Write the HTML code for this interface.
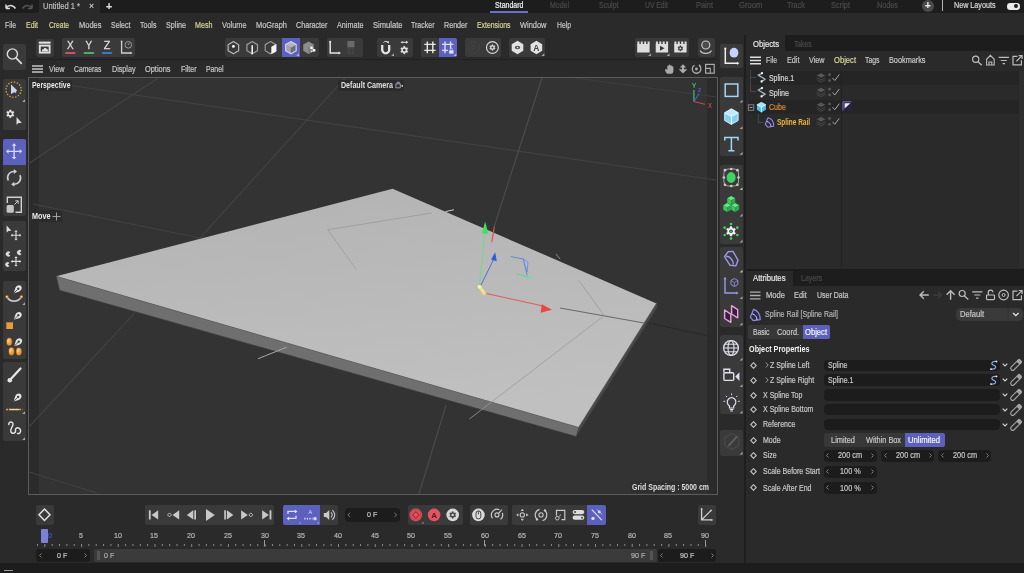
<!DOCTYPE html>
<html><head><meta charset="utf-8"><title>Cinema 4D</title>
<style>
html,body{margin:0;padding:0;background:#2a2a2a;overflow:hidden;}
body{width:1024px;height:573px;position:relative;font-family:"Liberation Sans",sans-serif;}
div,span,svg{position:absolute;display:block;}
span{white-space:nowrap;-webkit-text-stroke:0.2px currentColor;transform-origin:0 50%;}
#t{left:0;top:0;width:1024px;height:573px;will-change:transform;}
</style></head><body><div id="t">
<div style="left:0px;top:0px;width:1024px;height:13px;background:#1d1d1d;"></div>
<div style="left:39px;top:0px;width:61px;height:13px;background:#2a2a2a;"></div>
<span style="left:43.00px;top:2.12px;font-size:8.13px;line-height:9.76px;color:#bdbdbd;transform:scaleX(0.9302);">Untitled 1 *</span>
<span style="left:89.00px;top:0.22px;font-size:9.63px;line-height:11.56px;color:#d0d0d0;transform:scaleX(0.9000);">×</span>
<span style="left:106.00px;top:-1.06px;font-size:11.77px;line-height:14.12px;color:#e0e0e0;transform:scaleX(0.9000);font-weight:700;">+</span>
<svg style="left:4px;top:2px;" width="30" height="9" viewBox="0 0 30 9"><path d="M2 6.5 L2 2.5 M2 6.5 L6 6.5 M2 6.2 C4.5 2.5 9 2.5 11.5 6.5" stroke="#d8d8d8" stroke-width="1.5" fill="none"/><path d="M28 6.5 L28 2.5 M28 6.5 L24 6.5 M28 6.2 C25.5 2.5 21 2.5 18.5 6.5" stroke="#555" stroke-width="1.5" fill="none"/></svg>
<span style="left:494.50px;top:1.12px;font-size:8.13px;line-height:9.76px;color:#f0f0f0;transform:scaleX(0.8636);">Standard</span>
<div style="left:489.5px;top:11px;width:38.5px;height:2px;background:#6a70cc;"></div>
<span style="left:550.30px;top:1.12px;font-size:8.13px;line-height:9.76px;color:#4a4a4a;transform:scaleX(0.8579);">Model</span>
<span style="left:598.80px;top:1.12px;font-size:8.13px;line-height:9.76px;color:#4a4a4a;transform:scaleX(0.8628);">Sculpt</span>
<span style="left:645.30px;top:1.12px;font-size:8.13px;line-height:9.76px;color:#4a4a4a;transform:scaleX(0.8343);">UV Edit</span>
<span style="left:696.30px;top:1.12px;font-size:8.13px;line-height:9.76px;color:#4a4a4a;transform:scaleX(0.9172);">Paint</span>
<span style="left:738.80px;top:1.12px;font-size:8.13px;line-height:9.76px;color:#4a4a4a;transform:scaleX(0.9456);">Groom</span>
<span style="left:787.30px;top:1.12px;font-size:8.13px;line-height:9.76px;color:#4a4a4a;transform:scaleX(0.8988);">Track</span>
<span style="left:831.30px;top:1.12px;font-size:8.13px;line-height:9.76px;color:#4a4a4a;transform:scaleX(0.9141);">Script</span>
<span style="left:877.30px;top:1.12px;font-size:8.13px;line-height:9.76px;color:#4a4a4a;transform:scaleX(0.8934);">Nodes</span>
<div style="left:921.5px;top:0px;width:12px;height:12px;background:#4a4a4a;border-radius:6px;"></div>
<span style="left:924.69px;top:-0.92px;font-size:10.70px;line-height:12.84px;color:#e8e8e8;transform:scaleX(0.9000);font-weight:700;">+</span>
<div style="left:942.2px;top:0px;width:1.2px;height:10.5px;background:#b4b4b4;"></div>
<span style="left:953.50px;top:1.12px;font-size:8.13px;line-height:9.76px;color:#d8d8d8;transform:scaleX(0.8829);">New Layouts</span>
<div style="left:1007px;top:3px;width:12.5px;height:6.5px;background:#ececec;border-radius:3.25px;"></div>
<div style="left:1014.2px;top:4.1px;width:4.3px;height:4.3px;background:#1d1d1d;border-radius:2.2px;"></div>
<span style="left:5.00px;top:20.43px;font-size:8.45px;line-height:10.14px;color:#c6c6c6;transform:scaleX(0.8076);">File</span>
<span style="left:26.00px;top:20.43px;font-size:8.45px;line-height:10.14px;color:#d6d498;transform:scaleX(0.8239);">Edit</span>
<span style="left:48.50px;top:20.43px;font-size:8.45px;line-height:10.14px;color:#d6d498;transform:scaleX(0.7883);">Create</span>
<span style="left:78.50px;top:20.43px;font-size:8.45px;line-height:10.14px;color:#c6c6c6;transform:scaleX(0.8869);">Modes</span>
<span style="left:110.50px;top:20.43px;font-size:8.45px;line-height:10.14px;color:#c6c6c6;transform:scaleX(0.8300);">Select</span>
<span style="left:140.00px;top:20.43px;font-size:8.45px;line-height:10.14px;color:#c6c6c6;transform:scaleX(0.8362);">Tools</span>
<span style="left:165.50px;top:20.43px;font-size:8.45px;line-height:10.14px;color:#c6c6c6;transform:scaleX(0.8512);">Spline</span>
<span style="left:195.00px;top:20.43px;font-size:8.45px;line-height:10.14px;color:#d6d498;transform:scaleX(0.8467);">Mesh</span>
<span style="left:222.00px;top:20.43px;font-size:8.45px;line-height:10.14px;color:#c6c6c6;transform:scaleX(0.8690);">Volume</span>
<span style="left:256.00px;top:20.43px;font-size:8.45px;line-height:10.14px;color:#c6c6c6;transform:scaleX(0.8799);">MoGraph</span>
<span style="left:296.00px;top:20.43px;font-size:8.45px;line-height:10.14px;color:#c6c6c6;transform:scaleX(0.8488);">Character</span>
<span style="left:337.00px;top:20.43px;font-size:8.45px;line-height:10.14px;color:#c6c6c6;transform:scaleX(0.8546);">Animate</span>
<span style="left:373.00px;top:20.43px;font-size:8.45px;line-height:10.14px;color:#c6c6c6;transform:scaleX(0.8970);">Simulate</span>
<span style="left:411.00px;top:20.43px;font-size:8.45px;line-height:10.14px;color:#c6c6c6;transform:scaleX(0.8294);">Tracker</span>
<span style="left:443.50px;top:20.43px;font-size:8.45px;line-height:10.14px;color:#c6c6c6;transform:scaleX(0.8477);">Render</span>
<span style="left:476.50px;top:20.43px;font-size:8.45px;line-height:10.14px;color:#d6d498;transform:scaleX(0.8102);">Extensions</span>
<span style="left:519.50px;top:20.43px;font-size:8.45px;line-height:10.14px;color:#c6c6c6;transform:scaleX(0.8815);">Window</span>
<span style="left:557.00px;top:20.43px;font-size:8.45px;line-height:10.14px;color:#c6c6c6;transform:scaleX(0.8053);">Help</span>
<div style="left:36px;top:39px;width:17.5px;height:18px;background:#3a3a3a;border-radius:2px;"></div>
<div style="left:62px;top:38px;width:73px;height:19px;background:#3a3a3a;border-radius:2px;"></div>
<div style="left:224.5px;top:37.5px;width:94px;height:19px;background:#3a3a3a;border-radius:2px;"></div>
<div style="left:282px;top:37.5px;width:18px;height:19px;background:#5b61bd;"></div>
<div style="left:326.5px;top:37.5px;width:36px;height:19px;background:#3a3a3a;border-radius:2px;"></div>
<div style="left:377px;top:37.5px;width:36px;height:19px;background:#3a3a3a;border-radius:2px;"></div>
<div style="left:421px;top:37.5px;width:36px;height:19px;background:#3a3a3a;border-radius:2px;"></div>
<div style="left:439px;top:37.5px;width:18px;height:19px;background:#5b61bd;border-radius:0 2px 2px 0;"></div>
<div style="left:465px;top:37.5px;width:36px;height:19px;background:#3a3a3a;border-radius:2px;"></div>
<div style="left:509px;top:37.5px;width:36px;height:19px;background:#3a3a3a;border-radius:2px;"></div>
<div style="left:634.8px;top:38.3px;width:54px;height:18.3px;background:#3a3a3a;border-radius:2px;"></div>
<div style="left:697.5px;top:37.5px;width:17px;height:19px;background:#3a3a3a;border-radius:2px;"></div>
<div style="left:28px;top:58.5px;width:689px;height:1.6px;background:#202020;"></div>
<svg style="left:32px;top:65px;" width="11" height="8" viewBox="0 0 11 8"><path d="M0 1H11M0 4H11M0 7H11" stroke="#c8c8c8" stroke-width="1.3"/></svg>
<span style="left:48.50px;top:64.49px;font-size:8.35px;line-height:10.02px;color:#c6c6c6;transform:scaleX(0.8641);">View</span>
<span style="left:74.00px;top:64.49px;font-size:8.35px;line-height:10.02px;color:#c6c6c6;transform:scaleX(0.8123);">Cameras</span>
<span style="left:111.50px;top:64.49px;font-size:8.35px;line-height:10.02px;color:#c6c6c6;transform:scaleX(0.8588);">Display</span>
<span style="left:145.00px;top:64.49px;font-size:8.35px;line-height:10.02px;color:#c6c6c6;transform:scaleX(0.8866);">Options</span>
<span style="left:180.50px;top:64.49px;font-size:8.35px;line-height:10.02px;color:#c6c6c6;transform:scaleX(0.8358);">Filter</span>
<span style="left:206.00px;top:64.49px;font-size:8.35px;line-height:10.02px;color:#c6c6c6;transform:scaleX(0.8199);">Panel</span>
<div style="left:28px;top:77px;width:689.5px;height:418px;background:#333333;border:1px solid #5c5c5c;box-sizing:border-box;"></div>
<div style="left:29px;top:78px;width:9.5px;height:416px;background:#2b2b2b;"></div>
<div style="left:707px;top:78px;width:10px;height:416px;background:#2b2b2b;"></div>
<svg style="left:28px;top:78px;" width="688" height="416" viewBox="0 0 688 416"><line x1="0" y1="86" x2="130" y2="0" stroke="#424242" stroke-width="1.2" opacity="1"/><line x1="32" y1="6" x2="688" y2="102" stroke="#424242" stroke-width="1.2" opacity="1"/><line x1="317" y1="0" x2="172" y2="160" stroke="#424242" stroke-width="1.2" opacity="1"/><line x1="5" y1="126" x2="172" y2="160" stroke="#424242" stroke-width="1.2" opacity="1"/><line x1="514" y1="0" x2="466" y2="149" stroke="#4c4c4c" stroke-width="1.2" opacity="1"/><line x1="547" y1="0" x2="688" y2="19" stroke="#3d3d3d" stroke-width="1.2" opacity="1"/><line x1="107" y1="234.6" x2="0" y2="350" stroke="#424242" stroke-width="1.2" opacity="1"/><line x1="1" y1="394" x2="69" y2="415" stroke="#424242" stroke-width="1.2" opacity="1"/><line x1="418" y1="327" x2="391" y2="416" stroke="#4a4a4a" stroke-width="1.2" opacity="1"/><line x1="616" y1="244" x2="688" y2="259.6" stroke="#2a2a2a" stroke-width="1.2" opacity="1"/><defs><linearGradient id="sg" x1="0" y1="0" x2="0.2" y2="1"><stop offset="0" stop-color="#b3b3b3"/><stop offset="1" stop-color="#c0c0c0"/></linearGradient></defs><polygon points="28.2,198.3 364.6,110.7 628.5,225.5 550.6,349.4" fill="url(#sg)"/><polygon points="28.2,198.3 550.6,349.4 548.2,358.6 31.5,212.3" fill="#6f6f6f"/><polygon points="628.5,225.5 629.5,229 548.2,358.6 550.6,349.4" fill="#484848"/><path d="M28.2 198.3L550.6 349.4L628.5 225.5" stroke="#606060" stroke-width="0.7" fill="none"/><path d="M28.2 198.3L31.5 212.3L548.2 358.6L629.5 229" stroke="#3c3c3c" stroke-width="0.7" fill="none"/><polyline points="403.6,135 299.8,151.8 328.3,191.4" fill="none" stroke="#9a9a9a" stroke-width="0.8"/><line x1="417.6" y1="133.6" x2="426" y2="131.7" stroke="#cfcfcf" stroke-width="1" opacity="1"/><line x1="532" y1="230" x2="616" y2="245" stroke="#6a6a6a" stroke-width="1.2" opacity="1"/><line x1="550.6" y1="202" x2="575.8" y2="237" stroke="#9a9a9a" stroke-width="0.8" opacity="1"/><line x1="577" y1="237" x2="441.4" y2="341" stroke="#9a9a9a" stroke-width="0.8" opacity="1"/><line x1="230" y1="280.7" x2="258.8" y2="269.2" stroke="#a8a8a8" stroke-width="1" opacity="1"/><line x1="528" y1="176" x2="532" y2="181" stroke="#8a8a8a" stroke-width="1" opacity="1"/><line x1="451.5" y1="208.5" x2="457" y2="152" stroke="#74d888" stroke-width="1.1" opacity="1"/><polygon points="457.2,143.500 453.800,155.500 460.400,155.800" fill="#3fe060"/><line x1="456" y1="215" x2="515" y2="228" stroke="#dc5c5c" stroke-width="1.1" opacity="1"/><polygon points="524,231.800 513.800,226.300 512.600,234.800" fill="#ee4444"/><line x1="453" y1="207" x2="465.8" y2="181" stroke="#4a70d0" stroke-width="1" opacity="1"/><polygon points="467.200,174.200 463,181.500 468.800,183.300" fill="#2c5ee0"/><line x1="451.3" y1="208.5" x2="456.5" y2="215.5" stroke="#f0e488" stroke-width="3" opacity="1"/><circle cx="451.300" cy="208.800" r="1.800" fill="#f4f4b0"/><circle cx="456.300" cy="215.300" r="1.800" fill="#f4dc70"/><path d="M466.200 149L463.800 164L465.300 156Z" fill="#e05050" stroke="#e05050" stroke-width="1.100" stroke-linejoin="round"/><path d="M482.900 178.600L495.300 181L499.200 197.300" stroke="#5a80d4" stroke-width="0.900" fill="none"/><path d="M495.300 181L500 184.500L499 194Z" fill="#a8c0f0" stroke="#5a80d4" stroke-width="0.700"/><path d="M488.600 195.700L503 200" stroke="#58d890" stroke-width="1.100" fill="none"/><circle cx="501" cy="199.500" r="1.600" fill="#70e0a0"/><path d="M665.9 23.5 L665.9 12" stroke="#45c878" stroke-width="1.1"/><path d="M665.9 23.5 L677 26.2" stroke="#c84848" stroke-width="1.1"/><path d="M665.9 23.5 L671.2 15.5" stroke="#4a62c8" stroke-width="1.1"/></svg>
<span style="left:691.91px;top:81.83px;font-size:6.96px;line-height:8.35px;color:#45c878;transform:scaleX(0.9000);">Y</span>
<span style="left:698.18px;top:86.97px;font-size:5.89px;line-height:7.06px;color:#4a62c8;transform:scaleX(0.9000);">Z</span>
<span style="left:708.27px;top:102.15px;font-size:6.42px;line-height:7.70px;color:#c84848;transform:scaleX(0.9000);">X</span>
<div style="left:30px;top:80px;width:42px;height:10.5px;background:#2b2b2b;border-radius:1px;"></div>
<span style="left:32.00px;top:80.30px;font-size:8.67px;line-height:10.40px;color:#e8e8e8;transform:scaleX(0.7912);font-weight:700;-webkit-text-stroke:0;">Perspective</span>
<div style="left:338px;top:80px;width:66px;height:11px;background:#2b2b2b;border-radius:2px;"></div>
<span style="left:340.70px;top:80.30px;font-size:8.67px;line-height:10.40px;color:#e0e0e0;transform:scaleX(0.8179);font-weight:700;-webkit-text-stroke:0;">Default Camera</span>
<svg style="left:394.5px;top:80.5px;" width="9" height="8" viewBox="0 0 9 8"><path d="M0.900 2.800H5.300V6.800H0.900Z M2.200 2.800V1.200H4.300V2.800" stroke="#a4a4c4" stroke-width="0.900" fill="none"/><circle cx="7.200" cy="4.800" r="0.900" fill="#e4e4e4"/></svg>
<div style="left:30px;top:210px;width:32px;height:12px;background:#2b2b2b;border-radius:1px;"></div>
<span style="left:32.00px;top:211.30px;font-size:8.67px;line-height:10.40px;color:#ececec;transform:scaleX(0.8351);font-weight:700;-webkit-text-stroke:0;">Move</span>
<svg style="left:52px;top:211.5px;" width="9" height="9" viewBox="0 0 9 9"><path d="M4.5 0.5V8.5M0.5 4.5H8.5" stroke="#aaa" stroke-width="0.9"/></svg>
<div style="left:630px;top:481px;width:78px;height:12px;background:#2f2f2f;border-radius:1px;"></div>
<span style="left:632.00px;top:482.11px;font-size:8.99px;line-height:10.79px;color:#dcdcdc;transform:scaleX(0.7747);font-weight:700;-webkit-text-stroke:0;">Grid Spacing : 5000 cm</span>
<svg style="left:664px;top:63px;" width="54" height="12" viewBox="0 0 54 12"><path d="M3.200 10.800C1.500 9 0.800 7 1.300 6.200C2 5.600 2.800 6.300 3.300 7V3.200C3.300 2.300 4.600 2.300 4.700 3.200V2.300C4.800 1.300 6.200 1.300 6.300 2.300V2.800C6.400 1.900 7.800 1.900 7.900 2.900V3.800C8 3 9.300 3 9.400 3.900V7.500C9.400 9.500 8.600 10.800 7.300 10.800Z" fill="#ababab"/><path d="M19 1.200L22.300 4.600H20V6.200H23.300L19 10.600L14.700 6.200H18V4.600H15.700Z" fill="#ababab"/><path d="M35.300 2.600A4.300 4.300 0 1 1 30.500 2.200" stroke="#ababab" stroke-width="1.300" fill="none"/><circle cx="32.400" cy="6" r="1.400" fill="#ababab"/><circle cx="35.600" cy="2.500" r="0.900" fill="#ababab"/><rect x="41.600" y="1.400" width="8.600" height="8.800" stroke="#ababab" stroke-width="1.200" fill="none"/><path d="M41.600 5.400H46.300V10.200" stroke="#ababab" stroke-width="1.100" fill="none"/></svg>
<div style="left:2.5px;top:43.5px;width:23.5px;height:26.5px;background:#3a3a3a;border-radius:2px;"></div>
<div style="left:2.5px;top:78.5px;width:23.5px;height:51.5px;background:#3a3a3a;border-radius:2px;"></div>
<div style="left:2.5px;top:139px;width:23.5px;height:77px;background:#3a3a3a;border-radius:2px;"></div>
<div style="left:2.5px;top:139px;width:23.5px;height:25.5px;background:#5b61bd;border-radius:2px 2px 0 0;"></div>
<div style="left:2.5px;top:220.5px;width:23.5px;height:50.5px;background:#3a3a3a;border-radius:2px;"></div>
<div style="left:2.5px;top:280.5px;width:23.5px;height:78.5px;background:#3a3a3a;border-radius:2px;"></div>
<div style="left:2.5px;top:362px;width:23.5px;height:79px;background:#3a3a3a;border-radius:2px;"></div>
<div style="left:720px;top:43.5px;width:23px;height:24.5px;background:#3a3a3a;border-radius:2px;"></div>
<div style="left:720px;top:77px;width:23px;height:78.5px;background:#3a3a3a;border-radius:2px;"></div>
<div style="left:720px;top:164.5px;width:23px;height:79.5px;background:#3a3a3a;border-radius:2px;"></div>
<div style="left:720px;top:246.5px;width:23px;height:80px;background:#3a3a3a;border-radius:2px;"></div>
<div style="left:720px;top:335px;width:23px;height:79px;background:#3a3a3a;border-radius:2px;"></div>
<div style="left:720px;top:430px;width:23px;height:26px;background:#3a3a3a;border-radius:2px;"></div>
<div style="left:744.3px;top:35px;width:2.2px;height:527.5px;background:#1f1f1f;"></div>
<div style="left:746.5px;top:35px;width:278px;height:234px;background:#2a2a2a;"></div>
<div style="left:785px;top:35px;width:239px;height:16px;background:#1d1d1d;"></div>
<span style="left:753.00px;top:39.49px;font-size:8.35px;line-height:10.02px;color:#e4e4e4;transform:scaleX(0.9190);">Objects</span>
<span style="left:794.00px;top:39.49px;font-size:8.35px;line-height:10.02px;color:#4a4a4a;transform:scaleX(0.8027);">Takes</span>
<svg style="left:749.5px;top:56px;" width="11" height="9" viewBox="0 0 11 9"><path d="M0 1.200H11M0 4.500H11M0 7.800H11" stroke="#e0e0e0" stroke-width="1.500"/></svg>
<span style="left:766.00px;top:55.49px;font-size:8.35px;line-height:10.02px;color:#c6c6c6;transform:scaleX(0.8180);">File</span>
<span style="left:786.50px;top:55.49px;font-size:8.35px;line-height:10.02px;color:#c6c6c6;transform:scaleX(0.8692);">Edit</span>
<span style="left:808.50px;top:55.49px;font-size:8.35px;line-height:10.02px;color:#c6c6c6;transform:scaleX(0.8641);">View</span>
<span style="left:833.50px;top:55.49px;font-size:8.35px;line-height:10.02px;color:#d6d498;transform:scaleX(0.9121);">Object</span>
<span style="left:864.50px;top:55.49px;font-size:8.35px;line-height:10.02px;color:#c6c6c6;transform:scaleX(0.8225);">Tags</span>
<span style="left:888.50px;top:55.49px;font-size:8.35px;line-height:10.02px;color:#c6c6c6;transform:scaleX(0.8745);">Bookmarks</span>
<div style="left:749px;top:70.5px;width:275px;height:14.5px;background:#252525;"></div>
<div style="left:749px;top:99.5px;width:275px;height:14.5px;background:#252525;"></div>
<div style="left:841px;top:70.5px;width:1px;height:198px;background:#222222;"></div>
<div style="left:1018.5px;top:70.5px;width:5.5px;height:197px;background:#2e2e2e;"></div>
<span style="left:769.40px;top:73.49px;font-size:8.35px;line-height:10.02px;color:#d4d4d4;transform:scaleX(0.8289);">Spline.1</span>
<span style="left:769.40px;top:88.49px;font-size:8.35px;line-height:10.02px;color:#d4d4d4;transform:scaleX(0.8621);">Spline</span>
<span style="left:769.40px;top:102.49px;font-size:8.35px;line-height:10.02px;color:#d68a3c;transform:scaleX(0.8421);">Cube</span>
<span style="left:777.00px;top:117.49px;font-size:8.35px;line-height:10.02px;color:#f0b440;transform:scaleX(0.7735);font-weight:700;-webkit-text-stroke:0;">Spline Rail</span>
<div style="left:746.5px;top:269px;width:278px;height:293px;background:#2a2a2a;"></div>
<div style="left:746.5px;top:269px;width:278px;height:1.5px;background:#1c1c1c;"></div>
<div style="left:793px;top:270.5px;width:231px;height:15.5px;background:#1d1d1d;"></div>
<span style="left:753.00px;top:273.49px;font-size:8.35px;line-height:10.02px;color:#e4e4e4;transform:scaleX(0.9219);">Attributes</span>
<span style="left:801.00px;top:273.49px;font-size:8.35px;line-height:10.02px;color:#4a4a4a;transform:scaleX(0.8384);">Layers</span>
<svg style="left:749.5px;top:290.5px;" width="11" height="9" viewBox="0 0 11 9"><path d="M0 1.200H10.500M0 4.500H10.500M0 7.800H10.500" stroke="#b0b0b0" stroke-width="1.300"/></svg>
<span style="left:766.00px;top:290.49px;font-size:8.35px;line-height:10.02px;color:#c6c6c6;transform:scaleX(0.9102);">Mode</span>
<span style="left:794.30px;top:290.49px;font-size:8.35px;line-height:10.02px;color:#c6c6c6;transform:scaleX(0.8831);">Edit</span>
<span style="left:816.50px;top:290.49px;font-size:8.35px;line-height:10.02px;color:#c6c6c6;transform:scaleX(0.8385);">User Data</span>
<span style="left:765.00px;top:309.49px;font-size:8.35px;line-height:10.02px;color:#b2b2b2;transform:scaleX(0.8415);">Spline Rail [Spline Rail]</span>
<div style="left:955.5px;top:307.5px;width:67px;height:13.5px;background:#3a3a3a;border-radius:5px;"></div>
<span style="left:960.00px;top:309.49px;font-size:8.35px;line-height:10.02px;color:#c6c6c6;transform:scaleX(0.9076);">Default</span>
<div style="left:748px;top:325px;width:82px;height:13.5px;background:#383838;border-radius:2px;"></div>
<div style="left:803px;top:325px;width:27px;height:13.5px;background:#5b61bd;border-radius:0 2px 2px 0;"></div>
<span style="left:752.50px;top:327.49px;font-size:8.35px;line-height:10.02px;color:#c6c6c6;transform:scaleX(0.8085);">Basic</span>
<span style="left:777.00px;top:327.49px;font-size:8.35px;line-height:10.02px;color:#c6c6c6;transform:scaleX(0.8783);">Coord.</span>
<span style="left:805.00px;top:327.49px;font-size:8.35px;line-height:10.02px;color:#f4f4f4;transform:scaleX(0.9121);">Object</span>
<span style="left:748.50px;top:344.49px;font-size:8.35px;line-height:10.02px;color:#f2f2f2;transform:scaleX(0.8697);font-weight:700;-webkit-text-stroke:0;">Object Properties</span>
<svg style="left:749.5px;top:361.8px;" width="7" height="7" viewBox="0 0 7 7"><path d="M3.500 0.700L6.300 3.500 3.500 6.300 0.700 3.500Z" stroke="#c4c4c4" stroke-width="1.100" fill="none"/></svg>
<svg style="left:764.5px;top:362.3px;" width="4" height="6" viewBox="0 0 4 6"><path d="M0.800 0.500L3.200 3 0.800 5.500" stroke="#aaa" stroke-width="0.900" fill="none"/></svg>
<span style="left:770.30px;top:360.49px;font-size:8.35px;line-height:10.02px;color:#c6c6c6;transform:scaleX(0.8423);">Z Spline Left</span>
<div style="left:823.5px;top:359.5px;width:176px;height:11.5px;background:#1c1c1c;border-radius:4px;"></div>
<svg style="left:1001.5px;top:363.3px;" width="6" height="4" viewBox="0 0 6 4"><path d="M0.700 0.700L3 3 5.300 0.700" stroke="#d0d0d0" stroke-width="1.200" fill="none"/></svg>
<svg style="left:1008px;top:357.3px" width="16" height="16" viewBox="-8 -8 16 16"><g transform="rotate(45)"><rect x="-2" y="-6.300" width="4" height="13" rx="2" fill="none" stroke="#a4a4a4" stroke-width="1.100"/><rect x="-2.500" y="-7" width="5" height="4.200" rx="1.600" fill="#a4a4a4"/></g></svg>
<svg style="left:749.5px;top:376.7px;" width="7" height="7" viewBox="0 0 7 7"><path d="M3.500 0.700L6.300 3.500 3.500 6.300 0.700 3.500Z" stroke="#c4c4c4" stroke-width="1.100" fill="none"/></svg>
<svg style="left:764.5px;top:377.2px;" width="4" height="6" viewBox="0 0 4 6"><path d="M0.800 0.500L3.200 3 0.800 5.500" stroke="#aaa" stroke-width="0.900" fill="none"/></svg>
<span style="left:770.30px;top:375.49px;font-size:8.35px;line-height:10.02px;color:#c6c6c6;transform:scaleX(0.8423);">Z Spline Right</span>
<div style="left:823.5px;top:374.4px;width:176px;height:11.5px;background:#1c1c1c;border-radius:4px;"></div>
<svg style="left:1001.5px;top:378.2px;" width="6" height="4" viewBox="0 0 6 4"><path d="M0.700 0.700L3 3 5.300 0.700" stroke="#d0d0d0" stroke-width="1.200" fill="none"/></svg>
<svg style="left:1008px;top:372.2px" width="16" height="16" viewBox="-8 -8 16 16"><g transform="rotate(45)"><rect x="-2" y="-6.300" width="4" height="13" rx="2" fill="none" stroke="#a4a4a4" stroke-width="1.100"/><rect x="-2.500" y="-7" width="5" height="4.200" rx="1.600" fill="#a4a4a4"/></g></svg>
<svg style="left:749.5px;top:391.5px;" width="7" height="7" viewBox="0 0 7 7"><path d="M3.500 0.700L6.300 3.500 3.500 6.300 0.700 3.500Z" stroke="#c4c4c4" stroke-width="1.100" fill="none"/></svg>
<span style="left:762.80px;top:390.49px;font-size:8.35px;line-height:10.02px;color:#c6c6c6;transform:scaleX(0.8423);">X Spline Top</span>
<div style="left:823.5px;top:389.2px;width:176px;height:11.5px;background:#1c1c1c;border-radius:4px;"></div>
<svg style="left:1001.5px;top:393px;" width="6" height="4" viewBox="0 0 6 4"><path d="M0.700 0.700L3 3 5.300 0.700" stroke="#d0d0d0" stroke-width="1.200" fill="none"/></svg>
<svg style="left:1008px;top:387px" width="16" height="16" viewBox="-8 -8 16 16"><g transform="rotate(45)"><rect x="-2" y="-6.300" width="4" height="13" rx="2" fill="none" stroke="#a4a4a4" stroke-width="1.100"/><rect x="-2.500" y="-7" width="5" height="4.200" rx="1.600" fill="#a4a4a4"/></g></svg>
<svg style="left:749.5px;top:406.1px;" width="7" height="7" viewBox="0 0 7 7"><path d="M3.500 0.700L6.300 3.500 3.500 6.300 0.700 3.500Z" stroke="#c4c4c4" stroke-width="1.100" fill="none"/></svg>
<span style="left:762.80px;top:404.49px;font-size:8.35px;line-height:10.02px;color:#c6c6c6;transform:scaleX(0.8423);">X Spline Bottom</span>
<div style="left:823.5px;top:403.8px;width:176px;height:11.5px;background:#1c1c1c;border-radius:4px;"></div>
<svg style="left:1001.5px;top:407.6px;" width="6" height="4" viewBox="0 0 6 4"><path d="M0.700 0.700L3 3 5.300 0.700" stroke="#d0d0d0" stroke-width="1.200" fill="none"/></svg>
<svg style="left:1008px;top:401.6px" width="16" height="16" viewBox="-8 -8 16 16"><g transform="rotate(45)"><rect x="-2" y="-6.300" width="4" height="13" rx="2" fill="none" stroke="#a4a4a4" stroke-width="1.100"/><rect x="-2.500" y="-7" width="5" height="4.200" rx="1.600" fill="#a4a4a4"/></g></svg>
<svg style="left:749.5px;top:421.0px;" width="7" height="7" viewBox="0 0 7 7"><path d="M3.500 0.700L6.300 3.500 3.500 6.300 0.700 3.500Z" stroke="#c4c4c4" stroke-width="1.100" fill="none"/></svg>
<span style="left:762.80px;top:419.49px;font-size:8.35px;line-height:10.02px;color:#c6c6c6;transform:scaleX(0.8423);">Reference</span>
<div style="left:823.5px;top:418.7px;width:176px;height:11.5px;background:#1c1c1c;border-radius:4px;"></div>
<svg style="left:1001.5px;top:422.5px;" width="6" height="4" viewBox="0 0 6 4"><path d="M0.700 0.700L3 3 5.300 0.700" stroke="#d0d0d0" stroke-width="1.200" fill="none"/></svg>
<svg style="left:1008px;top:416.5px" width="16" height="16" viewBox="-8 -8 16 16"><g transform="rotate(45)"><rect x="-2" y="-6.300" width="4" height="13" rx="2" fill="none" stroke="#a4a4a4" stroke-width="1.100"/><rect x="-2.500" y="-7" width="5" height="4.200" rx="1.600" fill="#a4a4a4"/></g></svg>
<svg style="left:749.5px;top:436.5px;" width="7" height="7" viewBox="0 0 7 7"><path d="M3.500 0.700L6.300 3.500 3.500 6.300 0.700 3.500Z" stroke="#c4c4c4" stroke-width="1.100" fill="none"/></svg>
<span style="left:762.80px;top:435.49px;font-size:8.35px;line-height:10.02px;color:#c6c6c6;transform:scaleX(0.8423);">Mode</span>
<svg style="left:749.5px;top:452.0px;" width="7" height="7" viewBox="0 0 7 7"><path d="M3.500 0.700L6.300 3.500 3.500 6.300 0.700 3.500Z" stroke="#c4c4c4" stroke-width="1.100" fill="none"/></svg>
<span style="left:762.80px;top:450.49px;font-size:8.35px;line-height:10.02px;color:#c6c6c6;transform:scaleX(0.8423);">Size</span>
<svg style="left:749.5px;top:468.1px;" width="7" height="7" viewBox="0 0 7 7"><path d="M3.500 0.700L6.300 3.500 3.500 6.300 0.700 3.500Z" stroke="#c4c4c4" stroke-width="1.100" fill="none"/></svg>
<span style="left:762.80px;top:466.49px;font-size:8.35px;line-height:10.02px;color:#c6c6c6;transform:scaleX(0.8423);">Scale Before Start</span>
<svg style="left:749.5px;top:484.3px;" width="7" height="7" viewBox="0 0 7 7"><path d="M3.500 0.700L6.300 3.500 3.500 6.300 0.700 3.500Z" stroke="#c4c4c4" stroke-width="1.100" fill="none"/></svg>
<span style="left:762.80px;top:483.49px;font-size:8.35px;line-height:10.02px;color:#c6c6c6;transform:scaleX(0.8423);">Scale After End</span>
<span style="left:828.00px;top:360.49px;font-size:8.35px;line-height:10.02px;color:#c6c6c6;transform:scaleX(0.8405);">Spline</span>
<span style="left:828.00px;top:375.49px;font-size:8.35px;line-height:10.02px;color:#c6c6c6;transform:scaleX(0.8455);">Spline.1</span>
<div style="left:823.5px;top:432.5px;width:121.5px;height:14px;background:#383838;border-radius:2px;"></div>
<div style="left:905px;top:432.5px;width:40px;height:14px;background:#5b61bd;border-radius:0 2px 2px 0;"></div>
<span style="left:830.50px;top:435.49px;font-size:8.35px;line-height:10.02px;color:#c6c6c6;transform:scaleX(0.8921);">Limited</span>
<span style="left:866.00px;top:435.49px;font-size:8.35px;line-height:10.02px;color:#c6c6c6;transform:scaleX(0.8775);">Within Box</span>
<span style="left:908.00px;top:435.49px;font-size:8.35px;line-height:10.02px;color:#f4f4f4;transform:scaleX(0.9199);">Unlimited</span>
<div style="left:823.5px;top:449.5px;width:53px;height:12px;background:#1c1c1c;border-radius:4px;"></div>
<svg style="left:826.0px;top:453.0px;" width="3" height="5" viewBox="0 0 3 5"><path d="M2.500 0.500L0.500 2.500 2.500 4.500" stroke="#7c7c7c" stroke-width="1" fill="none"/></svg>
<svg style="left:871.0px;top:453.0px;" width="3" height="5" viewBox="0 0 3 5"><path d="M0.500 0.500L2.500 2.500 0.500 4.500" stroke="#7c7c7c" stroke-width="1" fill="none"/></svg>
<span style="left:838.00px;top:451.12px;font-size:8.13px;line-height:9.76px;color:#c6c6c6;transform:scaleX(0.9000);">200 cm</span>
<div style="left:881px;top:449.5px;width:53px;height:12px;background:#1c1c1c;border-radius:4px;"></div>
<svg style="left:883.5px;top:453.0px;" width="3" height="5" viewBox="0 0 3 5"><path d="M2.500 0.500L0.500 2.500 2.500 4.500" stroke="#7c7c7c" stroke-width="1" fill="none"/></svg>
<svg style="left:928.5px;top:453.0px;" width="3" height="5" viewBox="0 0 3 5"><path d="M0.500 0.500L2.500 2.500 0.500 4.500" stroke="#7c7c7c" stroke-width="1" fill="none"/></svg>
<span style="left:895.50px;top:451.12px;font-size:8.13px;line-height:9.76px;color:#c6c6c6;transform:scaleX(0.9000);">200 cm</span>
<div style="left:938px;top:449.5px;width:53px;height:12px;background:#1c1c1c;border-radius:4px;"></div>
<svg style="left:940.5px;top:453.0px;" width="3" height="5" viewBox="0 0 3 5"><path d="M2.500 0.500L0.500 2.500 2.500 4.500" stroke="#7c7c7c" stroke-width="1" fill="none"/></svg>
<svg style="left:985.5px;top:453.0px;" width="3" height="5" viewBox="0 0 3 5"><path d="M0.500 0.500L2.500 2.500 0.500 4.500" stroke="#7c7c7c" stroke-width="1" fill="none"/></svg>
<span style="left:952.50px;top:451.12px;font-size:8.13px;line-height:9.76px;color:#c6c6c6;transform:scaleX(0.9000);">200 cm</span>
<div style="left:823.5px;top:465.6px;width:53px;height:12px;background:#1c1c1c;border-radius:4px;"></div>
<svg style="left:826.0px;top:469.1px;" width="3" height="5" viewBox="0 0 3 5"><path d="M2.500 0.500L0.500 2.500 2.500 4.500" stroke="#7c7c7c" stroke-width="1" fill="none"/></svg>
<svg style="left:871.0px;top:469.1px;" width="3" height="5" viewBox="0 0 3 5"><path d="M0.500 0.500L2.500 2.500 0.500 4.500" stroke="#7c7c7c" stroke-width="1" fill="none"/></svg>
<span style="left:839.62px;top:467.12px;font-size:8.13px;line-height:9.76px;color:#c6c6c6;transform:scaleX(0.9000);">100 %</span>
<div style="left:823.5px;top:481.8px;width:53px;height:12px;background:#1c1c1c;border-radius:4px;"></div>
<svg style="left:826.0px;top:485.3px;" width="3" height="5" viewBox="0 0 3 5"><path d="M2.500 0.500L0.500 2.500 2.500 4.500" stroke="#7c7c7c" stroke-width="1" fill="none"/></svg>
<svg style="left:871.0px;top:485.3px;" width="3" height="5" viewBox="0 0 3 5"><path d="M0.500 0.500L2.500 2.500 0.500 4.500" stroke="#7c7c7c" stroke-width="1" fill="none"/></svg>
<span style="left:839.62px;top:484.12px;font-size:8.13px;line-height:9.76px;color:#c6c6c6;transform:scaleX(0.9000);">100 %</span>
<div style="left:35.5px;top:505px;width:18px;height:19.5px;background:#3a3a3a;border-radius:2px;"></div>
<div style="left:145px;top:505px;width:129px;height:19.5px;background:#3a3a3a;border-radius:2px;"></div>
<div style="left:282.5px;top:505px;width:55px;height:19.5px;background:#3a3a3a;border-radius:2px;"></div>
<div style="left:282.5px;top:505px;width:37.5px;height:19.5px;background:#5b61bd;border-radius:2px 0 0 2px;"></div>
<div style="left:345px;top:507.5px;width:55px;height:14px;background:#1c1c1c;border-radius:4px;"></div>
<span style="left:367.35px;top:510.25px;font-size:7.92px;line-height:9.50px;color:#c6c6c6;transform:scaleX(0.9000);">0 F</span>
<div style="left:407.5px;top:505px;width:55px;height:19.5px;background:#3a3a3a;border-radius:2px;"></div>
<div style="left:470px;top:505px;width:37.5px;height:19.5px;background:#3a3a3a;border-radius:2px;"></div>
<div style="left:512px;top:505px;width:94px;height:19.5px;background:#3a3a3a;border-radius:2px;"></div>
<div style="left:587px;top:505px;width:19px;height:19.5px;background:#5b61bd;border-radius:0 2px 2px 0;"></div>
<div style="left:698px;top:505px;width:18px;height:19.5px;background:#3a3a3a;border-radius:2px;"></div>
<div style="left:41px;top:529px;width:7px;height:13.5px;background:#7b80d8;border-radius:1px;"></div>
<span style="left:48.27px;top:531.25px;font-size:7.92px;line-height:9.50px;color:#4a56c8;transform:scaleX(0.9000);">0</span>
<span style="left:78.98px;top:531.25px;font-size:7.92px;line-height:9.50px;color:#b8b8b8;transform:scaleX(0.9000);">5</span>
<span style="left:113.71px;top:531.25px;font-size:7.92px;line-height:9.50px;color:#b8b8b8;transform:scaleX(0.9000);">10</span>
<span style="left:150.42px;top:531.25px;font-size:7.92px;line-height:9.50px;color:#b8b8b8;transform:scaleX(0.9000);">15</span>
<span style="left:187.13px;top:531.25px;font-size:7.92px;line-height:9.50px;color:#b8b8b8;transform:scaleX(0.9000);">20</span>
<span style="left:223.84px;top:531.25px;font-size:7.92px;line-height:9.50px;color:#b8b8b8;transform:scaleX(0.9000);">25</span>
<span style="left:260.55px;top:531.25px;font-size:7.92px;line-height:9.50px;color:#b8b8b8;transform:scaleX(0.9000);">30</span>
<span style="left:297.26px;top:531.25px;font-size:7.92px;line-height:9.50px;color:#b8b8b8;transform:scaleX(0.9000);">35</span>
<span style="left:333.97px;top:531.25px;font-size:7.92px;line-height:9.50px;color:#b8b8b8;transform:scaleX(0.9000);">40</span>
<span style="left:370.68px;top:531.25px;font-size:7.92px;line-height:9.50px;color:#b8b8b8;transform:scaleX(0.9000);">45</span>
<span style="left:407.39px;top:531.25px;font-size:7.92px;line-height:9.50px;color:#b8b8b8;transform:scaleX(0.9000);">50</span>
<span style="left:444.10px;top:531.25px;font-size:7.92px;line-height:9.50px;color:#b8b8b8;transform:scaleX(0.9000);">55</span>
<span style="left:480.81px;top:531.25px;font-size:7.92px;line-height:9.50px;color:#b8b8b8;transform:scaleX(0.9000);">60</span>
<span style="left:517.52px;top:531.25px;font-size:7.92px;line-height:9.50px;color:#b8b8b8;transform:scaleX(0.9000);">65</span>
<span style="left:554.23px;top:531.25px;font-size:7.92px;line-height:9.50px;color:#b8b8b8;transform:scaleX(0.9000);">70</span>
<span style="left:590.94px;top:531.25px;font-size:7.92px;line-height:9.50px;color:#b8b8b8;transform:scaleX(0.9000);">75</span>
<span style="left:627.65px;top:531.25px;font-size:7.92px;line-height:9.50px;color:#b8b8b8;transform:scaleX(0.9000);">80</span>
<span style="left:664.36px;top:531.25px;font-size:7.92px;line-height:9.50px;color:#b8b8b8;transform:scaleX(0.9000);">85</span>
<span style="left:701.07px;top:531.25px;font-size:7.92px;line-height:9.50px;color:#b8b8b8;transform:scaleX(0.9000);">90</span>
<svg style="left:29px;top:543.5px;" width="690" height="4" viewBox="0 0 690 4"><rect x="8.00" y="0" width="1" height="2" fill="#8a8a8a"/><rect x="15.34" y="0" width="1" height="3" fill="#8a8a8a"/><rect x="22.68" y="0" width="1" height="2" fill="#8a8a8a"/><rect x="30.03" y="0" width="1" height="2" fill="#8a8a8a"/><rect x="37.37" y="0" width="1" height="2" fill="#8a8a8a"/><rect x="44.71" y="0" width="1" height="2" fill="#8a8a8a"/><rect x="52.05" y="0" width="1" height="3" fill="#8a8a8a"/><rect x="59.39" y="0" width="1" height="2" fill="#8a8a8a"/><rect x="66.74" y="0" width="1" height="2" fill="#8a8a8a"/><rect x="74.08" y="0" width="1" height="2" fill="#8a8a8a"/><rect x="81.42" y="0" width="1" height="2" fill="#8a8a8a"/><rect x="88.76" y="0" width="1" height="3" fill="#8a8a8a"/><rect x="96.10" y="0" width="1" height="2" fill="#8a8a8a"/><rect x="103.45" y="0" width="1" height="2" fill="#8a8a8a"/><rect x="110.79" y="0" width="1" height="2" fill="#8a8a8a"/><rect x="118.13" y="0" width="1" height="2" fill="#8a8a8a"/><rect x="125.47" y="0" width="1" height="3" fill="#8a8a8a"/><rect x="132.81" y="0" width="1" height="2" fill="#8a8a8a"/><rect x="140.16" y="0" width="1" height="2" fill="#8a8a8a"/><rect x="147.50" y="0" width="1" height="2" fill="#8a8a8a"/><rect x="154.84" y="0" width="1" height="2" fill="#8a8a8a"/><rect x="162.18" y="0" width="1" height="3" fill="#8a8a8a"/><rect x="169.52" y="0" width="1" height="2" fill="#8a8a8a"/><rect x="176.87" y="0" width="1" height="2" fill="#8a8a8a"/><rect x="184.21" y="0" width="1" height="2" fill="#8a8a8a"/><rect x="191.55" y="0" width="1" height="2" fill="#8a8a8a"/><rect x="198.89" y="0" width="1" height="3" fill="#8a8a8a"/><rect x="206.23" y="0" width="1" height="2" fill="#8a8a8a"/><rect x="213.58" y="0" width="1" height="2" fill="#8a8a8a"/><rect x="220.92" y="0" width="1" height="2" fill="#8a8a8a"/><rect x="228.26" y="0" width="1" height="2" fill="#8a8a8a"/><rect x="235.60" y="0" width="1" height="3" fill="#8a8a8a"/><rect x="242.94" y="0" width="1" height="2" fill="#8a8a8a"/><rect x="250.29" y="0" width="1" height="2" fill="#8a8a8a"/><rect x="257.63" y="0" width="1" height="2" fill="#8a8a8a"/><rect x="264.97" y="0" width="1" height="2" fill="#8a8a8a"/><rect x="272.31" y="0" width="1" height="3" fill="#8a8a8a"/><rect x="279.65" y="0" width="1" height="2" fill="#8a8a8a"/><rect x="287.00" y="0" width="1" height="2" fill="#8a8a8a"/><rect x="294.34" y="0" width="1" height="2" fill="#8a8a8a"/><rect x="301.68" y="0" width="1" height="2" fill="#8a8a8a"/><rect x="309.02" y="0" width="1" height="3" fill="#8a8a8a"/><rect x="316.36" y="0" width="1" height="2" fill="#8a8a8a"/><rect x="323.71" y="0" width="1" height="2" fill="#8a8a8a"/><rect x="331.05" y="0" width="1" height="2" fill="#8a8a8a"/><rect x="338.39" y="0" width="1" height="2" fill="#8a8a8a"/><rect x="345.73" y="0" width="1" height="3" fill="#8a8a8a"/><rect x="353.07" y="0" width="1" height="2" fill="#8a8a8a"/><rect x="360.42" y="0" width="1" height="2" fill="#8a8a8a"/><rect x="367.76" y="0" width="1" height="2" fill="#8a8a8a"/><rect x="375.10" y="0" width="1" height="2" fill="#8a8a8a"/><rect x="382.44" y="0" width="1" height="3" fill="#8a8a8a"/><rect x="389.78" y="0" width="1" height="2" fill="#8a8a8a"/><rect x="397.13" y="0" width="1" height="2" fill="#8a8a8a"/><rect x="404.47" y="0" width="1" height="2" fill="#8a8a8a"/><rect x="411.81" y="0" width="1" height="2" fill="#8a8a8a"/><rect x="419.15" y="0" width="1" height="3" fill="#8a8a8a"/><rect x="426.49" y="0" width="1" height="2" fill="#8a8a8a"/><rect x="433.84" y="0" width="1" height="2" fill="#8a8a8a"/><rect x="441.18" y="0" width="1" height="2" fill="#8a8a8a"/><rect x="448.52" y="0" width="1" height="2" fill="#8a8a8a"/><rect x="455.86" y="0" width="1" height="3" fill="#8a8a8a"/><rect x="463.20" y="0" width="1" height="2" fill="#8a8a8a"/><rect x="470.55" y="0" width="1" height="2" fill="#8a8a8a"/><rect x="477.89" y="0" width="1" height="2" fill="#8a8a8a"/><rect x="485.23" y="0" width="1" height="2" fill="#8a8a8a"/><rect x="492.57" y="0" width="1" height="3" fill="#8a8a8a"/><rect x="499.91" y="0" width="1" height="2" fill="#8a8a8a"/><rect x="507.26" y="0" width="1" height="2" fill="#8a8a8a"/><rect x="514.60" y="0" width="1" height="2" fill="#8a8a8a"/><rect x="521.94" y="0" width="1" height="2" fill="#8a8a8a"/><rect x="529.28" y="0" width="1" height="3" fill="#8a8a8a"/><rect x="536.62" y="0" width="1" height="2" fill="#8a8a8a"/><rect x="543.97" y="0" width="1" height="2" fill="#8a8a8a"/><rect x="551.31" y="0" width="1" height="2" fill="#8a8a8a"/><rect x="558.65" y="0" width="1" height="2" fill="#8a8a8a"/><rect x="565.99" y="0" width="1" height="3" fill="#8a8a8a"/><rect x="573.33" y="0" width="1" height="2" fill="#8a8a8a"/><rect x="580.68" y="0" width="1" height="2" fill="#8a8a8a"/><rect x="588.02" y="0" width="1" height="2" fill="#8a8a8a"/><rect x="595.36" y="0" width="1" height="2" fill="#8a8a8a"/><rect x="602.70" y="0" width="1" height="3" fill="#8a8a8a"/><rect x="610.04" y="0" width="1" height="2" fill="#8a8a8a"/><rect x="617.39" y="0" width="1" height="2" fill="#8a8a8a"/><rect x="624.73" y="0" width="1" height="2" fill="#8a8a8a"/><rect x="632.07" y="0" width="1" height="2" fill="#8a8a8a"/><rect x="639.41" y="0" width="1" height="3" fill="#8a8a8a"/><rect x="646.75" y="0" width="1" height="2" fill="#8a8a8a"/><rect x="654.10" y="0" width="1" height="2" fill="#8a8a8a"/><rect x="661.44" y="0" width="1" height="2" fill="#8a8a8a"/><rect x="668.78" y="0" width="1" height="2" fill="#8a8a8a"/><rect x="676.12" y="0" width="1" height="3" fill="#8a8a8a"/></svg>
<div style="left:264.01px;top:540px;width:1px;height:6px;background:#9a9a9a;"></div>
<div style="left:484.27px;top:540px;width:1px;height:6px;background:#9a9a9a;"></div>
<div style="left:704.53px;top:540px;width:1px;height:6px;background:#9a9a9a;"></div>
<div style="left:36px;top:549px;width:53.5px;height:12.5px;background:#1c1c1c;border-radius:3px;"></div>
<span style="left:57.35px;top:551.25px;font-size:7.92px;line-height:9.50px;color:#c6c6c6;transform:scaleX(0.9000);">0 F</span>
<div style="left:94px;top:549px;width:563px;height:12.5px;background:#3b3b3b;border-radius:2px;"></div>
<div style="left:97px;top:550.5px;width:3px;height:9.5px;background:#555;"></div>
<span style="left:104.00px;top:551.25px;font-size:7.92px;line-height:9.50px;color:#b0b0b0;transform:scaleX(0.9000);">0 F</span>
<span style="left:630.74px;top:551.25px;font-size:7.92px;line-height:9.50px;color:#b0b0b0;transform:scaleX(0.9000);">90 F</span>
<div style="left:650px;top:550.5px;width:3px;height:9.5px;background:#555;"></div>
<div style="left:658px;top:549px;width:58px;height:12.5px;background:#1c1c1c;border-radius:3px;"></div>
<span style="left:679.87px;top:551.25px;font-size:7.92px;line-height:9.50px;color:#c6c6c6;transform:scaleX(0.9000);">90 F</span>
<svg style="left:39px;top:552.5px;" width="3" height="5" viewBox="0 0 3 5"><path d="M2.500 0.500L0.500 2.500 2.500 4.500" stroke="#7c7c7c" stroke-width="1" fill="none"/></svg>
<svg style="left:660px;top:552.5px;" width="3" height="5" viewBox="0 0 3 5"><path d="M2.500 0.500L0.500 2.500 2.500 4.500" stroke="#7c7c7c" stroke-width="1" fill="none"/></svg>
<svg style="left:84px;top:552.5px;" width="3" height="5" viewBox="0 0 3 5"><path d="M0.500 0.500L2.500 2.500 0.500 4.500" stroke="#7c7c7c" stroke-width="1" fill="none"/></svg>
<svg style="left:711px;top:552.5px;" width="3" height="5" viewBox="0 0 3 5"><path d="M0.500 0.500L2.500 2.500 0.500 4.500" stroke="#7c7c7c" stroke-width="1" fill="none"/></svg>
<div style="left:0px;top:563px;width:1024px;height:10px;background:#1d1d1d;"></div>
<div style="left:3.5px;top:570px;width:9.5px;height:1.3px;background:#9a9a9a;"></div>
<svg style="left:0;top:0;pointer-events:none" width="1024" height="573" viewBox="0 0 1024 573" font-family="Liberation Sans, sans-serif"><rect x="38.8" y="41.6" width="11.8" height="2.1" fill="#e0e0e0"/><rect x="39.800" y="45.600" width="9.800" height="7" fill="none" stroke="#e0e0e0" stroke-width="1.900"/><path d="M42 51.5 C41.5 49.5 43 49 43.500 49.300 C44 47.500 46.500 47.500 46.800 49.300 C48.300 49 48.500 51 47.800 51.500Z" fill="#e0e0e0"/><text x="67.0" y="49.200" font-size="10.500" textLength="6.600" lengthAdjust="spacingAndGlyphs" fill="#dedede" stroke="#dedede" stroke-width="0.300">X</text><rect x="65.0" y="52" width="10.6" height="2.1" rx="0.8" fill="#d0505f"/><text x="85.60000000000001" y="49.200" font-size="10.500" textLength="6.600" lengthAdjust="spacingAndGlyphs" fill="#dedede" stroke="#dedede" stroke-width="0.300">Y</text><rect x="83.60000000000001" y="52" width="10.6" height="2.1" rx="0.8" fill="#4fae62"/><text x="103.7" y="49.200" font-size="10.500" textLength="6.600" lengthAdjust="spacingAndGlyphs" fill="#dedede" stroke="#dedede" stroke-width="0.300">Z</text><rect x="101.7" y="52" width="10.6" height="2.1" rx="0.8" fill="#3f77c0"/><path d="M121.600 41.500V53H131.500" stroke="#d0d0d0" stroke-width="1.300" fill="none"/><circle cx="121.600" cy="41.500" r="0.900" fill="#d0d0d0"/><polygon points="132.300,53 130.300,51.800 130.300,54.200" fill="#d0d0d0"/><circle cx="128.300" cy="44.800" r="3.300" stroke="#9a9a9a" stroke-width="1" fill="none"/><path d="M128.300 42.800V44.800L129.800 43.600" stroke="#9a9a9a" stroke-width="0.700" fill="none"/><polygon points="233.40,41.60 238.68,44.65 238.68,50.75 233.40,53.80 228.12,50.75 228.12,44.65" fill="none" stroke="#b8b8b8" stroke-width="1.200" stroke-linejoin="round"/><circle cx="233.400" cy="46.400" r="1.400" fill="#fff"/><polygon points="252.20,41.60 257.48,44.65 257.48,50.75 252.20,53.80 246.92,50.75 246.92,44.65" fill="none" stroke="#a0a0a0" stroke-width="1.200"/><path d="M252.200 45.200V54.200" stroke="#f0f0f0" stroke-width="1.600"/><polygon points="270.50,41.60 275.78,44.65 275.78,50.75 270.50,53.80 265.22,50.75 265.22,44.65" fill="none" stroke="#9a9a9a" stroke-width="1.200"/><polygon points="271.300,46.800 276.300,44.100 276.300,51.600 271.300,54.300" fill="#f4f4f4"/><polygon points="290.9,47.7 285.2,44.400000000000006 285.2,51.0 290.9,53.800000000000004" fill="#a4a4a8"/><polygon points="290.9,47.7 296.59999999999997,44.400000000000006 296.59999999999997,51.0 290.9,53.800000000000004" fill="#6c6c72"/><polygon points="290.9,47.7 285.2,44.400000000000006 290.9,41.6 296.59999999999997,44.400000000000006" fill="#b4b4ba"/><polygon points="290.90,41.60 296.18,44.65 296.18,50.75 290.90,53.80 285.62,50.75 285.62,44.65" fill="none" stroke="#cfd0ff" stroke-width="1.200"/><polygon points="299,53.2 299,56 296.2,56" fill="#b0b0e0"/><polygon points="308.60,41.50 313.97,44.60 313.97,50.80 308.60,53.90 303.23,50.80 303.23,44.60" fill="#8c8c8c"/><polygon points="308.6,47.7 314.0,44.6 314.0,50.800000000000004 308.6,53.900000000000006" fill="#787878"/><rect x="310.200" y="46.500" width="2.600" height="2.600" fill="#f4f4f4"/><rect x="312.700" y="49" width="2.600" height="2.600" fill="#f4f4f4"/><rect x="310.800" y="50.500" width="1.600" height="1.600" fill="#ddd"/><path d="M330.200 41.800V53H339.500" stroke="#e4e4e4" stroke-width="1.500" fill="none"/><circle cx="330.200" cy="41.800" r="1.100" fill="#e4e4e4"/><polygon points="341,53 338.500,51.500 338.500,54.500" fill="#e4e4e4"/><rect x="347.400" y="41" width="7" height="6.400" fill="#6a6a6a"/><rect x="347.400" y="47.800" width="7" height="6.600" fill="#444"/><path d="M347.400 51H354.400M350.900 47.800V54.400" stroke="#3a3a3a" stroke-width="0.700"/><path d="M382.200 45V49.800A3.500 3.500 0 0 0 389.200 49.800V45" stroke="#e4e4e4" stroke-width="2.300" fill="none"/><path d="M383.500 42.500C384.500 41 387 41 388 42.300" stroke="#e4e4e4" stroke-width="1" fill="none"/><polygon points="389,41 388.800,43.600 386.600,42.600" fill="#e4e4e4"/><polygon points="394,53.2 394,56 391.2,56" fill="#a8a8a8"/><polygon points="403.45,47.50 403.63,46.36 404.97,46.36 405.15,47.50 406.13,48.07 407.20,47.65 407.88,48.81 406.98,49.53 406.98,50.67 407.88,51.39 407.20,52.55 406.13,52.13 405.15,52.70 404.97,53.84 403.63,53.84 403.45,52.70 402.47,52.13 401.40,52.55 400.72,51.39 401.62,50.67 401.62,49.53 400.72,48.81 401.40,47.65 402.47,48.07" fill="#e4e4e4" stroke="#e4e4e4" stroke-width="0.5" stroke-linejoin="round"/><circle cx="404.3" cy="50.1" r="1.4" fill="#3a3a3a"/><path d="M401.500 42.300H407" stroke="#e4e4e4" stroke-width="1"/><polygon points="408.300,42.300 406,40.800 406,43.800" fill="#e4e4e4"/><polygon points="400.500,42.300 402.500,41.200 402.500,43.400" fill="#e4e4e4"/><path d="M427.300 41.500V53.200M432.800 41.500V53.200M424.300 44.400H435.700M424.300 50.400H435.700" stroke="#e8e8e8" stroke-width="1.400"/><path d="M445 41.500V53.200M450.600 41.500V48.500M442 44.400H453.500M442 50.400H448" stroke="#dcdcff" stroke-width="1.400"/><rect x="449.200" y="50.300" width="4.300" height="3.300" fill="#e4e4ff"/><path d="M450.200 50.300V49.300A1.100 1.100 0 0 1 452.400 49.300V50.300" stroke="#e4e4ff" stroke-width="0.700" fill="none"/><polygon points="456.3,53.2 456.3,56 453.5,56" fill="#b0b0e0"/><circle cx="473.800" cy="47.500" r="5.800" stroke="#444" stroke-width="1" fill="none"/><circle cx="473.800" cy="47.500" r="2" stroke="#444" stroke-width="1" fill="none"/><circle cx="492.400" cy="47.500" r="5.900" stroke="#d8d8d8" stroke-width="1.200" fill="none"/><polygon points="491.75,45.51 491.89,44.65 492.91,44.65 493.05,45.51 493.80,45.95 494.62,45.63 495.13,46.52 494.44,47.07 494.44,47.93 495.13,48.48 494.62,49.37 493.80,49.05 493.05,49.49 492.91,50.35 491.89,50.35 491.75,49.49 491.00,49.05 490.18,49.37 489.67,48.48 490.36,47.93 490.36,47.07 489.67,46.52 490.18,45.63 491.00,45.95" fill="#d8d8d8" stroke="#d8d8d8" stroke-width="0.5" stroke-linejoin="round"/><circle cx="492.4" cy="47.5" r="1" fill="#3a3a3a"/><polygon points="517.50,40.80 523.30,44.15 523.30,50.85 517.50,54.20 511.70,50.85 511.70,44.15" fill="#e2e2e2"/><ellipse cx="517.500" cy="47.500" rx="2.800" ry="1.700" fill="#555"/><circle cx="517.500" cy="47.500" r="0.800" fill="#e2e2e2"/><polygon points="536.40,40.80 542.20,44.15 542.20,50.85 536.40,54.20 530.60,50.85 530.60,44.15" fill="#e2e2e2"/><text x="536.400" y="50.600" font-size="8.500" font-weight="700" text-anchor="middle" fill="#444">A</text><polygon points="544.3,53.2 544.3,56 541.5,56" fill="#a8a8a8"/><rect x="637.2" y="44" width="12.400" height="8.500" fill="#dedede"/><rect x="637.4000000000001" y="41.500" width="2" height="3" fill="#dedede"/><rect x="640.8000000000001" y="41.500" width="2" height="3" fill="#dedede"/><rect x="644.2" y="41.500" width="2" height="3" fill="#dedede"/><rect x="647.6000000000001" y="41.500" width="2" height="3" fill="#dedede"/><polygon points="651,53.2 651,56 648.2,56" fill="#a8a8a8"/><rect x="655.7" y="44" width="12.400" height="8.500" fill="#dedede"/><rect x="655.9000000000001" y="41.500" width="2" height="3" fill="#dedede"/><rect x="659.3000000000001" y="41.500" width="2" height="3" fill="#dedede"/><rect x="662.7" y="41.500" width="2" height="3" fill="#dedede"/><rect x="666.1000000000001" y="41.500" width="2" height="3" fill="#dedede"/><polygon points="660,45.800 664.500,48.300 660,50.800" fill="#3a3a3a"/><polygon points="669.5,53.2 669.5,56 666.7,56" fill="#a8a8a8"/><rect x="674.2" y="44" width="12.400" height="8.500" fill="#dedede"/><rect x="674.4000000000001" y="41.500" width="2" height="3" fill="#dedede"/><rect x="677.8000000000001" y="41.500" width="2" height="3" fill="#dedede"/><rect x="681.2" y="41.500" width="2" height="3" fill="#dedede"/><rect x="684.6000000000001" y="41.500" width="2" height="3" fill="#dedede"/><polygon points="679.82,46.62 679.94,45.84 680.86,45.84 680.98,46.62 681.65,47.01 682.39,46.72 682.85,47.52 682.23,48.01 682.23,48.79 682.85,49.28 682.39,50.08 681.65,49.79 680.98,50.18 680.86,50.96 679.94,50.96 679.82,50.18 679.15,49.79 678.41,50.08 677.95,49.28 678.57,48.79 678.57,48.01 677.95,47.52 678.41,46.72 679.15,47.01" fill="#3a3a3a" stroke="#3a3a3a" stroke-width="0.5" stroke-linejoin="round"/><circle cx="680.4" cy="48.4" r="0.9" fill="#dedede"/><circle cx="705.800" cy="45" r="4" stroke="#c8c8c8" stroke-width="1.200" fill="#4a4a4a"/><path d="M700.200 50.500C702 54.300 709.500 54.300 711.400 50.500" stroke="#c8c8c8" stroke-width="1.200" fill="none"/><circle cx="12.400" cy="54" r="5.100" stroke="#dcdcdc" stroke-width="1.400" fill="none"/><path d="M16 57.800L21.300 63.300" stroke="#dcdcdc" stroke-width="1.700" stroke-linecap="round"/><circle cx="13.600" cy="89.700" r="7.600" stroke="#e0a040" stroke-width="1.300" stroke-dasharray="1.400 1.580" fill="none"/><polygon points="11,84.500 11,94 13.300,91.800 15.800,93 16.500,92 " fill="#c8d4f0"/><polygon points="11,84.500 17.300,90.500 11,94" fill="#c8d4f0"/><polygon points="25,99.2 25,102 22.2,102" fill="#a8a8a8"/><polygon points="9.43,111.13 9.61,109.96 10.99,109.96 11.17,111.13 12.18,111.71 13.28,111.28 13.97,112.48 13.05,113.22 13.05,114.38 13.97,115.12 13.28,116.32 12.18,115.89 11.17,116.47 10.99,117.64 9.61,117.64 9.43,116.47 8.42,115.89 7.32,116.32 6.63,115.12 7.55,114.38 7.55,113.22 6.63,112.48 7.32,111.28 8.42,111.71" fill="#e8e8e8" stroke="#e8e8e8" stroke-width="0.5" stroke-linejoin="round"/><circle cx="10.3" cy="113.8" r="1.5" fill="#3a3a3a"/><polygon points="16.500,117 16.500,124.800 18.500,123 21.800,123" fill="#dcdcdc"/><path d="M7.1 151.3H21.1M14.1 144.3V158.3" stroke="#d8dcff" stroke-width="1.3"/><polygon points="6.1,151.3 8.5,148.9 8.5,153.70000000000002" fill="#d8dcff"/><polygon points="22.1,151.3 19.700000000000003,148.9 19.700000000000003,153.70000000000002" fill="#d8dcff"/><polygon points="14.1,143.3 11.7,145.70000000000002 16.5,145.70000000000002" fill="#d8dcff"/><polygon points="14.1,159.3 11.7,156.9 16.5,156.9" fill="#d8dcff"/><path d="M8.300 180.500A6.200 6.200 0 0 1 14.500 171.500" stroke="#d0d0d0" stroke-width="1.600" fill="none"/><path d="M19.900 175.200A6.200 6.200 0 0 1 13.700 184.200" stroke="#d0d0d0" stroke-width="1.600" fill="none"/><polygon points="17,171.400 13.800,169 13.800,174" fill="#d0d0d0"/><polygon points="11.200,184.200 14.400,181.800 14.400,186.800" fill="#d0d0d0"/><path d="M7.300 203V197.200H21.300V212.200H15.500" stroke="#d0d0d0" stroke-width="1.400" fill="none"/><rect x="6.600" y="205" width="7.200" height="7.800" rx="1.500" fill="#c4c4c4"/><path d="M14.500 204.500L18 201M15.300 200.800H18.200V203.700" stroke="#d0d0d0" stroke-width="1" fill="none"/><polygon points="6.600,225.500 6.600,232.500 8.400,231 11.400,230.800" fill="#dcdcdc"/><path d="M11.8 235.2H20.2M16 231.0V239.39999999999998" stroke="#dcdcdc" stroke-width="1.1"/><polygon points="10.8,235.2 12.5,233.5 12.5,236.89999999999998" fill="#dcdcdc"/><polygon points="21.2,235.2 19.5,233.5 19.5,236.89999999999998" fill="#dcdcdc"/><polygon points="16,230.0 14.3,231.7 17.7,231.7" fill="#dcdcdc"/><polygon points="16,240.39999999999998 14.3,238.7 17.7,238.7" fill="#dcdcdc"/><path d="M8.3 254L10.3 252.5A2.5 2.5 0 1 0 10.3 255.5Z" fill="#dcdcdc"/><path d="M19.5 252.5L21.5 251.0A2.5 2.5 0 1 0 21.5 254.0Z" fill="#dcdcdc"/><path d="M7.6 264.5L9.44 263.12A2.3 2.3 0 1 0 9.44 265.88Z" fill="#dcdcdc"/><path d="M11.8 261.4H20.2M16 257.2V265.59999999999997" stroke="#dcdcdc" stroke-width="1.1"/><polygon points="10.8,261.4 12.5,259.7 12.5,263.09999999999997" fill="#dcdcdc"/><polygon points="21.2,261.4 19.5,259.7 19.5,263.09999999999997" fill="#dcdcdc"/><polygon points="16,256.2 14.3,257.9 17.7,257.9" fill="#dcdcdc"/><polygon points="16,266.59999999999997 14.3,264.9 17.7,264.9" fill="#dcdcdc"/><g transform="translate(17.7 289.3) rotate(45)"><path d="M0 5.600L-2.500 0.800C-3.700 -1.800 -2.200 -4.600 0 -4.600C2.200 -4.600 3.700 -1.800 2.500 0.800Z" fill="#e6e6e6"/><path d="M0 5.600V0" stroke="#3a3a3a" stroke-width="0.800"/><circle cx="0" cy="-0.900" r="1.200" fill="#3a3a3a"/></g><path d="M7 297C10 302.500 18 302.500 21.200 297" stroke="#c4c4c4" stroke-width="1.600" fill="none"/><circle cx="6.900" cy="296.700" r="1.800" fill="#a8621c"/><circle cx="21.400" cy="296.700" r="1.800" fill="#a8621c"/><circle cx="6.900" cy="296.700" r="1" fill="#f4d8b0"/><circle cx="21.400" cy="296.700" r="1" fill="#f4d8b0"/><polygon points="25,302.2 25,305 22.2,305" fill="#a8a8a8"/><g transform="translate(17.7 315.9) rotate(45)"><path d="M0 5.600L-2.500 0.800C-3.700 -1.800 -2.200 -4.600 0 -4.600C2.200 -4.600 3.700 -1.800 2.500 0.800Z" fill="#e6e6e6"/><path d="M0 5.600V0" stroke="#3a3a3a" stroke-width="0.800"/><circle cx="0" cy="-0.900" r="1.200" fill="#3a3a3a"/></g><rect x="6.300" y="322.300" width="6.700" height="6.700" fill="#e89a3c"/><defs><radialGradient id="eg" cx="0.35" cy="0.35" r="0.7"><stop offset="0" stop-color="#f8d48c"/><stop offset="0.55" stop-color="#eaa044"/><stop offset="1" stop-color="#d88a30"/></radialGradient></defs><g transform="translate(18.1 342.3) rotate(45)"><path d="M0 5.600L-2.500 0.800C-3.700 -1.800 -2.200 -4.600 0 -4.600C2.200 -4.600 3.700 -1.800 2.500 0.800Z" fill="#e6e6e6"/><path d="M0 5.600V0" stroke="#3a3a3a" stroke-width="0.800"/><circle cx="0" cy="-0.900" r="1.200" fill="#3a3a3a"/></g><ellipse cx="9.3" cy="341.8" rx="3" ry="4.100" fill="url(#eg)" stroke="#5a3a14" stroke-width="0.600"/><ellipse cx="11.5" cy="351.4" rx="3" ry="4.100" fill="url(#eg)" stroke="#5a3a14" stroke-width="0.600"/><ellipse cx="18.9" cy="351.6" rx="3" ry="4.100" fill="url(#eg)" stroke="#5a3a14" stroke-width="0.600"/><path d="M20.500 368.500L11.300 378.600" stroke="#e4e4e4" stroke-width="2.300" stroke-linecap="round"/><circle cx="9.800" cy="380.300" r="2.300" fill="#e4e4e4"/><g transform="translate(17.5 397.6) rotate(45)"><path d="M0 5.600L-2.500 0.800C-3.700 -1.800 -2.200 -4.600 0 -4.600C2.200 -4.600 3.700 -1.800 2.500 0.800Z" fill="#e6e6e6"/><path d="M0 5.600V0" stroke="#3a3a3a" stroke-width="0.800"/><circle cx="0" cy="-0.900" r="1.200" fill="#3a3a3a"/></g><path d="M6 409.500H22.500" stroke="#e89a3c" stroke-width="1.300" stroke-dasharray="2.200 1"/><path d="M9.500 409.500H19" stroke="#f0d0a0" stroke-width="1.300"/><polygon points="25,411.2 25,414 22.2,414" fill="#a8a8a8"/><path d="M8.800 424.500C8.500 421.500 13 421 13 424.200C13 427 9.500 429 11 432C12.500 434.500 16 433 15.500 430C15 427.500 19.500 426.500 20.500 430C21 432 19.500 434 17.500 433.500" stroke="#e0e0e0" stroke-width="1.500" fill="none" stroke-linecap="round"/><polygon points="25,437.2 25,440 22.2,440" fill="#a8a8a8"/><path d="M725.300 48.800V63.300H738" stroke="#f0f0f0" stroke-width="1.500" fill="none"/><circle cx="725.300" cy="48.500" r="1.100" fill="#f0f0f0"/><polygon points="739.300,63.300 737,61.800 737,64.800" fill="#f0f0f0"/><ellipse cx="734" cy="52.700" rx="4.400" ry="4.900" fill="#c4d4ff"/><rect x="725.200" y="84" width="12.600" height="12.400" fill="none" stroke="#9fd8f8" stroke-width="1.500"/><polygon points="742.5,99.7 742.5,102.5 739.7,102.5" fill="#a8a8a8"/><polygon points="731.40,108.80 738.15,112.70 738.15,120.50 731.40,124.40 724.65,120.50 724.65,112.70" fill="#86d0f4"/><polygon points="731.4,116.6 724.65,112.70 731.4,108.8 738.15,112.70" fill="#bfe9ff"/><path d="M731.4 124.39999999999999V116.6L724.65 112.70M731.4 116.6L738.15 112.70" stroke="#f4fbff" stroke-width="0.900" fill="none"/><polygon points="731.40,108.80 738.15,112.70 738.15,120.50 731.40,124.40 724.65,120.50 724.65,112.70" fill="none" stroke="#e4f6ff" stroke-width="0.900"/><polygon points="742.5,126.2 742.5,129 739.7,129" fill="#a8a8a8"/><path d="M724.800 140.500V137.600H738V140.500M731.400 137.600V150.600M728.400 150.800H734.400" stroke="#9fd8f8" stroke-width="1.500" fill="none"/><polygon points="742.5,151.89999999999998 742.5,154.7 739.7,154.7" fill="#a8a8a8"/><rect x="723.900" y="169" width="14.600" height="17" rx="4" fill="none" stroke="#b0b0b0" stroke-width="0.900"/><ellipse cx="731.100" cy="177.500" rx="4.500" ry="5.400" fill="#3fd463"/><circle cx="725" cy="170.2" r="1.350" fill="#d4c4c4"/><circle cx="725" cy="184.8" r="1.350" fill="#d4c4c4"/><circle cx="737.4" cy="170.2" r="1.350" fill="#d4c4c4"/><circle cx="737.4" cy="184.8" r="1.350" fill="#d4c4c4"/><circle cx="731.2" cy="169" r="1.350" fill="#d4c4c4"/><circle cx="731.2" cy="186" r="1.350" fill="#d4c4c4"/><circle cx="723.9" cy="177.5" r="1.350" fill="#d4c4c4"/><circle cx="738.5" cy="177.5" r="1.350" fill="#d4c4c4"/><polygon points="742.5,187.2 742.5,190 739.7,190" fill="#c8c890"/><polygon points="731.2,200.5 727.22,198.20 731.2,195.9 735.18,198.20" fill="#5ce883"/><polygon points="731.2,200.5 727.22,198.20 727.22,202.80 731.2,205.1" fill="#3cc45e"/><polygon points="731.2,200.5 735.18,198.20 735.18,202.80 731.2,205.1" fill="#2fa84f"/><polygon points="727.2,207.5 723.22,205.20 727.2,202.9 731.18,205.20" fill="#5ce883"/><polygon points="727.2,207.5 723.22,205.20 723.22,209.80 727.2,212.1" fill="#3cc45e"/><polygon points="727.2,207.5 731.18,205.20 731.18,209.80 727.2,212.1" fill="#2fa84f"/><polygon points="735.2,207.5 731.22,205.20 735.2,202.9 739.18,205.20" fill="#5ce883"/><polygon points="735.2,207.5 731.22,205.20 731.22,209.80 735.2,212.1" fill="#3cc45e"/><polygon points="735.2,207.5 739.18,205.20 739.18,209.80 735.2,212.1" fill="#2fa84f"/><polygon points="742.5,213.7 742.5,216.5 739.7,216.5" fill="#a8a8a8"/><polygon points="729.93,228.01 730.15,226.58 731.85,226.58 732.07,228.01 733.31,228.73 734.67,228.20 735.52,229.67 734.38,230.58 734.38,232.02 735.52,232.93 734.67,234.40 733.31,233.87 732.07,234.59 731.85,236.02 730.15,236.02 729.93,234.59 728.69,233.87 727.33,234.40 726.48,232.93 727.62,232.02 727.62,230.58 726.48,229.67 727.33,228.20 728.69,228.73" fill="#f4f4f4" stroke="#f4f4f4" stroke-width="0.5" stroke-linejoin="round"/><circle cx="731" cy="231.3" r="1.8" fill="#3a3a3a"/><circle cx="731" cy="231.300" r="0.900" fill="#3fd463"/><circle cx="731.00" cy="224.00" r="1.300" fill="#3fd463"/><circle cx="737.32" cy="227.65" r="1.300" fill="#3fd463"/><circle cx="737.32" cy="234.95" r="1.300" fill="#3fd463"/><circle cx="731.00" cy="238.60" r="1.300" fill="#3fd463"/><circle cx="724.68" cy="234.95" r="1.300" fill="#3fd463"/><circle cx="724.68" cy="227.65" r="1.300" fill="#3fd463"/><polygon points="742.5,239.7 742.5,242.5 739.7,242.5" fill="#a8a8a8"/><path d="M724.500 256.600L728 251.800L733 251.400L738 260.200L735.800 265.900L730.100 265.300Z" fill="none" stroke="#9c98ee" stroke-width="1.400" stroke-linejoin="round"/><path d="M726 256.300C729.500 256 733.300 259.500 733.400 264.600" stroke="#9c98ee" stroke-width="1.400" fill="none"/><polygon points="742.5,269.7 742.5,272.5 739.7,272.5" fill="#c8c890"/><path d="M725 278.500V293H737" stroke="#9c98ee" stroke-width="1.400" fill="none"/><polygon points="725,276.800 723.500,279.300 726.500,279.300" fill="#9c98ee"/><polygon points="738.600,293 736.200,291.500 736.200,294.500" fill="#9c98ee"/><polygon points="734.40,278.50 737.86,280.50 737.86,284.50 734.40,286.50 730.94,284.50 730.94,280.50" fill="none" stroke="#9c98ee" stroke-width="0.900"/><path d="M734.400 286.500V282.500L731 280.500M734.400 282.500L737.800 280.500" stroke="#9c98ee" stroke-width="0.700" fill="none"/><polygon points="742.5,296.2 742.5,299 739.7,299" fill="#a8a8a8"/><path d="M724.600 310L730.800 314.200V322.300L724.600 318.500Z M731.600 305.600L737.700 309.600V317.800L731.600 314Z" fill="#3c1c42" stroke="#e6a4dc" stroke-width="1.400" stroke-linejoin="round"/><polygon points="742.5,322.4 742.5,325.2 739.7,325.2" fill="#a8a8a8"/><circle cx="731" cy="348" r="7.400" stroke="#e0e0ee" stroke-width="1.300" fill="none"/><ellipse cx="731" cy="348" rx="3" ry="7.400" stroke="#e0e0ee" stroke-width="1.100" fill="none"/><path d="M723.600 348H738.400M724.800 344.200H737.200M724.800 351.800H737.200" stroke="#e0e0ee" stroke-width="1" fill="none"/><polygon points="742.5,357.7 742.5,360.5 739.7,360.5" fill="#a8a8a8"/><rect x="723.900" y="372.800" width="9.800" height="7.600" rx="1.200" fill="none" stroke="#e0e0ee" stroke-width="1.400"/><path d="M723.900 372.500V369.200H729.700V372.500" stroke="#e0e0ee" stroke-width="1.400" fill="none"/><polygon points="735.300,376.600 739.400,372.300 739.400,381" fill="#e0e0ee"/><polygon points="742.5,384.2 742.5,387 739.7,387" fill="#a8a8a8"/><path d="M729.500 408V406C727 404.500 726.500 401 728.500 399A4.200 4.200 0 0 1 734.700 399C736.700 401 736 404.500 733.700 406V408Z" fill="none" stroke="#e0e0ee" stroke-width="1.200"/><path d="M729.800 409.500H733.400M730.300 411H732.900" stroke="#e0e0ee" stroke-width="1"/><path d="M731.600 393.500V395.200M725.800 395.800L727 397M737.400 395.800L736.200 397M723.500 401.300H725.200M738 401.300H739.700" stroke="#e0e0ee" stroke-width="1"/><polygon points="742.5,410.7 742.5,413.5 739.7,413.5" fill="#a8a8a8"/><polygon points="731.70,433.50 738.63,437.50 738.63,445.50 731.70,449.50 724.77,445.50 724.77,437.50" fill="none" stroke="#4a4a4a" stroke-width="1.200"/><path d="M728.500 445.800L737 436.500" stroke="#636363" stroke-width="1.800"/><polygon points="742.5,451.7 742.5,454.5 739.7,454.5" fill="#a8a8a8"/><path d="M761.9 73.30000000000001L758.1999999999999 75.10000000000001L765.1999999999999 79.2L761.6 81.4" stroke="#a4b8c8" stroke-width="1.300" fill="none" stroke-linejoin="round"/><circle cx="762.0" cy="73.2" r="1.150" fill="#fff"/><circle cx="761.6" cy="81.5" r="1.150" fill="#fff"/><path d="M761.9 88.2L758.1999999999999 90.0L765.1999999999999 94.1L761.6 96.3" stroke="#a4b8c8" stroke-width="1.300" fill="none" stroke-linejoin="round"/><circle cx="762.0" cy="88.1" r="1.150" fill="#fff"/><circle cx="761.6" cy="96.39999999999999" r="1.150" fill="#fff"/><path d="M750.500 70.500V91.500M750.500 77.500H756M750.500 91.500H756" stroke="#505050" stroke-width="0.800" fill="none"/><rect x="748.300" y="104.800" width="5.500" height="5.500" fill="none" stroke="#8a8a8a" stroke-width="0.900"/><path d="M749.500 107.500H752.600" stroke="#aaa" stroke-width="0.900"/><polygon points="761.40,102.00 765.90,104.60 765.90,109.80 761.40,112.40 756.90,109.80 756.90,104.60" fill="#54bcec"/><polygon points="761.400,107.200 756.900,104.600 761.400,102 765.900,104.600" fill="#a8e0fc"/><path d="M761.400 112.400V107.200L756.900 104.600M761.400 107.200L765.900 104.600" stroke="#eaf8ff" stroke-width="0.900" fill="none"/><path d="M758.300 114V122.500H763.500" stroke="#505050" stroke-width="0.800" fill="none"/><path d="M765.300 124.300L768 117.800C771.500 118.600 773.800 122 773.700 126.300L767.800 127.200Z" fill="#2c2848" stroke="#8e8ae4" stroke-width="1.100" stroke-linejoin="round"/><path d="M767 121.500C769.300 122 771 124 771 126.600" stroke="#d8d8f4" stroke-width="0.900" fill="none"/><polygon points="821,73.2 825.300,75.5 821,77.8 816.700,75.5" fill="#585858"/><path d="M816.700 77.8L821 80.1L825.300 77.8M816.700 79.8L821 82.1L825.300 79.8" stroke="#4c4c4c" stroke-width="0.900" fill="none"/><circle cx="829.600" cy="74.7" r="1.400" fill="#565656"/><circle cx="829.600" cy="80.5" r="1.400" fill="#565656"/><path d="M832.500 78.0L834.800 80.5L839.300 74.5" stroke="#a8a8a8" stroke-width="1" fill="none"/><polygon points="821,87.7 825.300,90 821,92.3 816.700,90" fill="#585858"/><path d="M816.700 92.3L821 94.6L825.300 92.3M816.700 94.3L821 96.6L825.300 94.3" stroke="#4c4c4c" stroke-width="0.900" fill="none"/><circle cx="829.600" cy="89.2" r="1.400" fill="#565656"/><circle cx="829.600" cy="95" r="1.400" fill="#565656"/><path d="M832.500 92.5L834.800 95L839.300 89" stroke="#a8a8a8" stroke-width="1" fill="none"/><polygon points="821,102.4 825.300,104.7 821,107.0 816.700,104.7" fill="#585858"/><path d="M816.700 107.0L821 109.3L825.300 107.0M816.700 109.0L821 111.3L825.300 109.0" stroke="#4c4c4c" stroke-width="0.900" fill="none"/><circle cx="829.600" cy="103.9" r="1.400" fill="#565656"/><circle cx="829.600" cy="109.7" r="1.400" fill="#565656"/><path d="M832.500 107.2L834.800 109.7L839.300 103.7" stroke="#a8a8a8" stroke-width="1" fill="none"/><polygon points="821,117.0 825.300,119.3 821,121.6 816.700,119.3" fill="#585858"/><path d="M816.700 121.6L821 123.89999999999999L825.300 121.6M816.700 123.6L821 125.89999999999999L825.300 123.6" stroke="#4c4c4c" stroke-width="0.900" fill="none"/><circle cx="829.600" cy="118.5" r="1.400" fill="#565656"/><circle cx="829.600" cy="124.3" r="1.400" fill="#565656"/><path d="M832.500 121.8L834.800 124.3L839.300 118.3" stroke="#a8a8a8" stroke-width="1" fill="none"/><rect x="842.500" y="101.300" width="9" height="9.600" fill="#2a2340"/><path d="M843 110.500V101.800H851.300" stroke="#7a6ad0" stroke-width="1" fill="none"/><polygon points="844.600,103.300 850.300,103.300 844.600,108.500" fill="#f0f0f8"/><circle cx="975.700" cy="59.300" r="3.100" stroke="#bdbdbd" stroke-width="1.200" fill="none"/><path d="M978 61.800L981.800 65.300" stroke="#bdbdbd" stroke-width="1.300"/><path d="M986.600 65V59.300L990.400 55.300L994.200 59.300V65Z M989 65V62H991.800V65" stroke="#bdbdbd" stroke-width="1.100" fill="none"/><path d="M998.700 57.300H1008.900M1000.800 60.500H1006.800M1002.600 63.700H1005" stroke="#bdbdbd" stroke-width="1.200"/><path d="M1017.4 56.3H1013.0V64.8H1021.4V60.3" stroke="#bdbdbd" stroke-width="1.200" fill="none"/><path d="M1016.4 61.3L1021.9 55.8M1018.6999999999999 55.599999999999994H1022.1V59.0" stroke="#bdbdbd" stroke-width="1.200" fill="none"/><path d="M920 295H928.800M923.800 291.2L920 295L923.800 298.8" stroke="#bdbdbd" stroke-width="1.400" fill="none"/><path d="M933.300 295H941.500M938 291.5L941.500 295L938 298.5" stroke="#3c3c3c" stroke-width="1.300" fill="none"/><path d="M950.600 299.8V291M946.600 294.7L950.600 290.7L954.600 294.7" stroke="#bdbdbd" stroke-width="1.400" fill="none"/><circle cx="962.200" cy="293.5" r="3" stroke="#bdbdbd" stroke-width="1.200" fill="none"/><path d="M964.500 296L968.300 299.5" stroke="#bdbdbd" stroke-width="1.300"/><path d="M972.200 291.8H982.400M974.300 295H980.300M976.100 298.2H978.500" stroke="#bdbdbd" stroke-width="1.200"/><rect x="986.500" y="295" width="8" height="4.600" rx="0.800" fill="none" stroke="#bdbdbd" stroke-width="1.200"/><path d="M988.300 295V292.5A2.300 2.300 0 0 1 992.900 292.2" stroke="#bdbdbd" stroke-width="1.200" fill="none"/><circle cx="1003.600" cy="295" r="4.800" stroke="#bdbdbd" stroke-width="1.200" fill="none"/><circle cx="1003.600" cy="295" r="1.500" stroke="#bdbdbd" stroke-width="1" fill="none"/><path d="M1017.4 291.2H1013.0V299.7H1021.4V295.2" stroke="#bdbdbd" stroke-width="1.200" fill="none"/><path d="M1016.4 296.2L1021.9 290.7M1018.6999999999999 290.5H1022.1V293.9" stroke="#bdbdbd" stroke-width="1.200" fill="none"/><path d="M750.300 317.200L753.600 309.300C757.600 310.300 760.300 314.500 760.200 319.600L753.200 320.600Z" fill="#2c2848" stroke="#8e8ae4" stroke-width="1.200" stroke-linejoin="round"/><path d="M752.200 313.800C755 314.300 757 316.800 757 320" stroke="#d8d8f4" stroke-width="1" fill="none"/><path d="M1008 308V320.500" stroke="#303030" stroke-width="0.800"/><path d="M1013 313L1015.800 315.600L1018.600 313" stroke="#e0e0e0" stroke-width="1.300" fill="none"/><path d="M996.300 361.5C991.500 360.8 990.500 364.3 993.700 365.3C997 366.3 996 369.8 991.200 369.1" stroke="#86b0e0" stroke-width="1.200" fill="none"/><circle cx="996.500" cy="361.5" r="0.900" fill="#e8eef8"/><circle cx="991" cy="369.2" r="0.900" fill="#e8eef8"/><path d="M996.300 376.4C991.500 375.7 990.500 379.2 993.700 380.2C997 381.2 996 384.7 991.200 384.0" stroke="#86b0e0" stroke-width="1.200" fill="none"/><circle cx="996.500" cy="376.4" r="0.900" fill="#e8eef8"/><circle cx="991" cy="384.09999999999997" r="0.900" fill="#e8eef8"/><polygon points="44.500,509 50,514.700 44.500,520.400 39,514.700" fill="none" stroke="#e0e0e0" stroke-width="1.500"/><rect x="148.900" y="510.29999999999995" width="1.800" height="9.200" fill="#c8c8c8"/><polygon points="151.500,514.9 158.200,510.29999999999995 158.200,519.5" fill="#c8c8c8"/><polygon points="169.500,512.9 171.500,514.9 169.500,516.9 167.500,514.9" fill="none" stroke="#c8c8c8" stroke-width="0.900"/><polygon points="172.500,514.9 179.200,510.29999999999995 179.200,519.5" fill="#c8c8c8"/><polygon points="186.800,514.9 193.300,510.29999999999995 193.300,519.5" fill="#c8c8c8"/><rect x="194.300" y="510.29999999999995" width="1.700" height="9.200" fill="#c8c8c8"/><polygon points="214.800,514.9 206,508.9 206,520.9" fill="#c8c8c8"/><rect x="224.200" y="510.29999999999995" width="1.700" height="9.200" fill="#c8c8c8"/><polygon points="233.400,514.9 226.900,510.29999999999995 226.900,519.5" fill="#c8c8c8"/><polygon points="247.800,514.9 241.100,510.29999999999995 241.100,519.5" fill="#c8c8c8"/><polygon points="250.800,512.9 252.800,514.9 250.800,516.9 248.800,514.9" fill="none" stroke="#c8c8c8" stroke-width="0.900"/><polygon points="268.800,514.9 262.100,510.29999999999995 262.100,519.5" fill="#c8c8c8"/><rect x="269.600" y="510.29999999999995" width="1.800" height="9.200" fill="#c8c8c8"/><path d="M288 514.1V511.4H295.500M296 515.6999999999999V518.4H288.500" stroke="#dcdcff" stroke-width="1.300" fill="none"/><polygon points="297.500,511.4 294.800,509.4 294.800,513.4" fill="#dcdcff"/><polygon points="286.500,518.4 289.200,516.4 289.200,520.4" fill="#dcdcff"/><polygon points="300.5,521.7 300.5,523.5 298.7,523.5" fill="#b0b0e0"/><text x="310.300" y="514.4" font-size="5.500" text-anchor="middle" fill="#dcdcff">A</text><path d="M304.300 518.6999999999999H312.500" stroke="#dcdcff" stroke-width="1.800" stroke-dasharray="1.200 1.300"/><rect x="313.500" y="517.1999999999999" width="3" height="3" fill="#dcdcff"/><polygon points="319,521.7 319,523.5 317.2,523.5" fill="#b0b0e0"/><polygon points="323.800,512.9 326,512.9 329.300,509.9 329.300,519.9 326,516.9 323.800,516.9" fill="#c8c8c8"/><path d="M331 512.4A3.300 3.300 0 0 1 331 517.4M332.300 510.09999999999997A6 6 0 0 1 332.300 519.6999999999999" stroke="#c8c8c8" stroke-width="1.100" fill="none"/><path d="M350.0 512.6999999999999L348.0 514.9L350.0 517.1" stroke="#7c7c7c" stroke-width="1" fill="none"/><path d="M394.5 512.6999999999999L396.5 514.9L394.5 517.1" stroke="#7c7c7c" stroke-width="1" fill="none"/><circle cx="415.800" cy="514.9" r="6.300" fill="#e2545e"/><circle cx="415.800" cy="514.9" r="5" fill="none" stroke="#c03a46" stroke-width="0.800"/><polygon points="415.800,511.59999999999997 419.100,514.9 415.800,518.1999999999999 412.500,514.9" fill="none" stroke="#a82c38" stroke-width="1.100"/><polygon points="423.5,521.7 423.5,523.5 421.7,523.5" fill="#aaa"/><circle cx="434.100" cy="514.9" r="6.300" fill="#e2545e"/><text x="434.100" y="517.8" font-size="8" font-weight="700" text-anchor="middle" fill="#5a1820">A</text><circle cx="452.700" cy="514.9" r="6.300" fill="#d8d8d8"/><polygon points="451.97,512.64 452.12,511.65 453.28,511.65 453.43,512.64 454.29,513.13 455.22,512.77 455.80,513.78 455.02,514.41 455.02,515.39 455.80,516.02 455.22,517.03 454.29,516.67 453.43,517.16 453.28,518.15 452.12,518.15 451.97,517.16 451.11,516.67 450.18,517.03 449.60,516.02 450.38,515.39 450.38,514.41 449.60,513.78 450.18,512.77 451.11,513.13" fill="#444" stroke="#444" stroke-width="0.5" stroke-linejoin="round"/><circle cx="452.7" cy="514.9" r="1.2" fill="#d8d8d8"/><circle cx="478.400" cy="514.9" r="6.300" fill="#dadada"/><rect x="476" y="510.9" width="4.800" height="8" rx="2.400" fill="none" stroke="#444" stroke-width="1"/><path d="M478.400 510.9V514.4" stroke="#444" stroke-width="0.900"/><path d="M492.500 518.4A5.800 5.800 0 0 1 499.500 509.7M502.300 512.9A5.800 5.800 0 0 1 500.500 519.4" stroke="#c8c8c8" stroke-width="1.200" fill="none"/><circle cx="497" cy="514.9" r="2" stroke="#c8c8c8" stroke-width="1.100" fill="none"/><path d="M498.500 513.4L502 509.59999999999997" stroke="#c8c8c8" stroke-width="1.100"/><circle cx="522.3" cy="514.9" r="2.100" stroke="#c8c8c8" stroke-width="1.100" fill="none"/><polygon points="528.5,514.9 526.1999999999999,513.3 526.1999999999999,516.5" fill="#c8c8c8"/><polygon points="516.0999999999999,514.9 518.4,516.5 518.4,513.3" fill="#c8c8c8"/><polygon points="522.3,521.1 520.6999999999999,518.8 523.9,518.8" fill="#c8c8c8"/><polygon points="522.3,508.7 523.9,511.0 520.6999999999999,511.0" fill="#c8c8c8"/><circle cx="541" cy="514.9" r="2.100" stroke="#c8c8c8" stroke-width="1.100" fill="none"/><path d="M537.5 519.5A5.800 5.800 0 0 1 539.5 509.29999999999995M544.5 510.29999999999995A5.800 5.800 0 0 1 542.5 520.5" stroke="#c8c8c8" stroke-width="1.200" fill="none"/><circle cx="545" cy="510.4" r="1.200" fill="#c8c8c8"/><circle cx="537" cy="519.4" r="1.200" fill="#c8c8c8"/><path d="M556.500 515.4V510.4H564.800V519.6999999999999H561.500" stroke="#c8c8c8" stroke-width="1.200" fill="none"/><circle cx="557.300" cy="518.1999999999999" r="1.800" stroke="#c8c8c8" stroke-width="1" fill="none"/><path d="M558.700 516.9L561 514.6" stroke="#c8c8c8" stroke-width="0.900"/><rect x="572.600" y="509.9" width="11.700" height="4.300" rx="2.100" fill="#dcdcdc"/><rect x="572.600" y="515.5" width="11.700" height="4.300" rx="2.100" fill="#dcdcdc"/><circle cx="575" cy="512.05" r="1" fill="#444"/><circle cx="582" cy="517.65" r="1" fill="#444"/><path d="M591.800 509.59999999999997L601.800 520.1999999999999" stroke="#dcdcff" stroke-width="1.200"/><circle cx="593" cy="518.4" r="1.700" fill="#dcdcff"/><circle cx="599.300" cy="511.9" r="1.400" fill="#dcdcff"/><path d="M597 509.4L602 514.4" stroke="#dcdcff" stroke-width="0.800"/><path d="M701.600 509.09999999999997V519.9H711.600M701.600 519.9L710.800 510.59999999999997" stroke="#d0d0d0" stroke-width="1.300" fill="none"/><circle cx="701.600" cy="508.9" r="0.900" fill="#d0d0d0"/><circle cx="711.800" cy="519.9" r="0.900" fill="#d0d0d0"/><circle cx="711" cy="510.4" r="0.900" fill="#d0d0d0"/></svg>
</div></body></html>
